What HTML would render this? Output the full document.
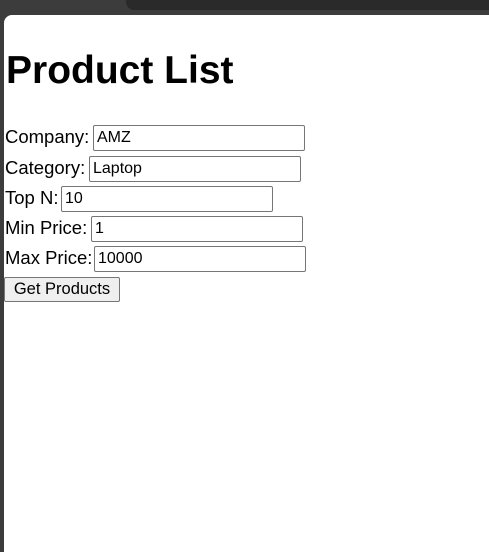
<!DOCTYPE html>
<html><head><style>
html,body{margin:0;padding:0;width:489px;height:552px;overflow:hidden;background:#3c3c3c;font-family:"Liberation Sans",sans-serif}
.top{position:absolute;left:0;top:0;width:489px;height:15px;background:#3c3c3c}
.tab{position:absolute;left:126px;top:-10px;width:400px;height:20px;background:#2a2a2a;border-radius:8px}
.page{position:absolute;left:4px;top:15px;width:485px;height:537px;background:#fff;border-top-left-radius:8px}
h1{position:absolute;left:2px;top:32px;margin:0;font-size:39px;font-weight:bold;line-height:48px}
.l{position:absolute;left:1px;font-size:18.5px;line-height:24px;color:#000}
.i{position:absolute;border:1px solid #767676;border-radius:2px;font-size:16px;line-height:24px;padding-left:3px;box-sizing:border-box;width:212px;height:26px}
.b{position:absolute;left:0;top:262px;width:116px;height:25px;border:1px solid #767676;border-radius:2px;background:#efefef;font-size:16.5px;line-height:23px;text-align:center;box-sizing:border-box}
</style></head><body>
<div class="top"><div class="tab"></div></div>
<div class="page">
<h1>Product List</h1>
<div class="l" style="top:110px">Company:</div><div class="i" style="left:89px;top:110px">AMZ</div>
<div class="l" style="top:141px">Category:</div><div class="i" style="left:85px;top:141px">Laptop</div>
<div class="l" style="top:171px">Top N:</div><div class="i" style="left:57px;top:171px">10</div>
<div class="l" style="top:201px">Min Price:</div><div class="i" style="left:87px;top:201px">1</div>
<div class="l" style="top:231px">Max Price:</div><div class="i" style="left:90px;top:231px">10000</div>
<div class="b">Get Products</div>
</div>
</body></html>
